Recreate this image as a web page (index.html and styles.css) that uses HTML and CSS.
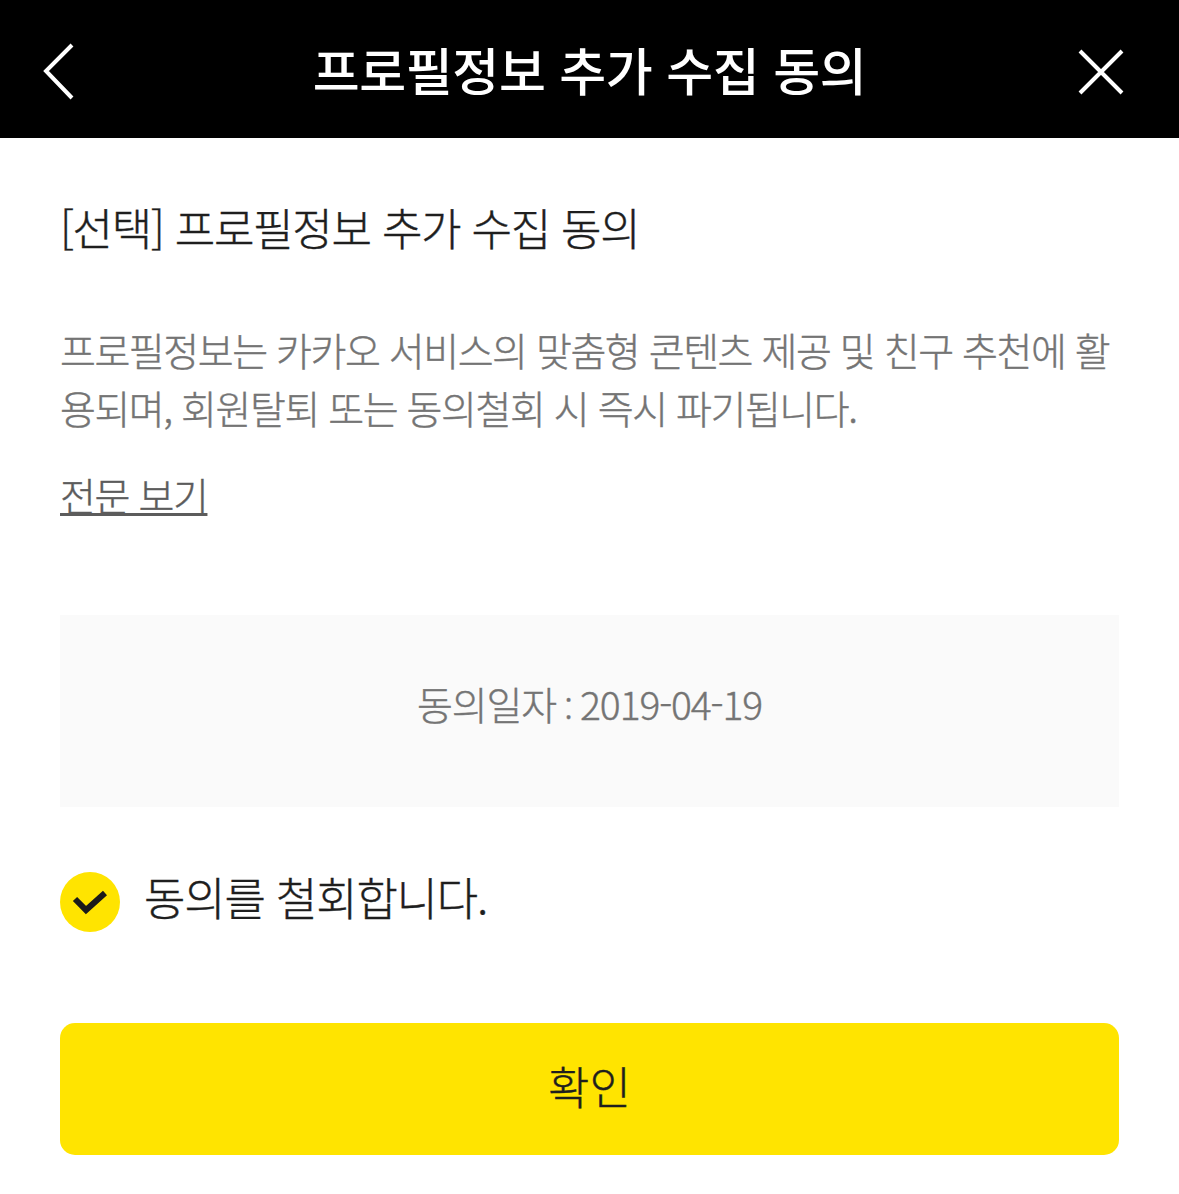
FILE: index.html
```html
<!DOCTYPE html>
<html lang="ko">
<head>
    <meta charset="UTF-8">
    <title>프로필정보 추가 수집 동의</title>
    <link rel="stylesheet" href="styles.css">
</head>
<body>
    <header class="top-bar">
        <svg class="icon-back" width="34" height="58" viewBox="0 0 34 58">
            <path d="M30 2 L4 28 L30 55" fill="none" stroke="#fff" stroke-width="4"/>
        </svg>
        <h1 class="top-title">프로필정보 추가 수집 동의</h1>
        <svg class="icon-close" width="46" height="46" viewBox="0 0 46 46">
            <path d="M2 2 L44 44 M44 2 L2 44" fill="none" stroke="#fff" stroke-width="4"/>
        </svg>
    </header>
    <main class="content">
        <h2 class="terms-title">[선택] 프로필정보 추가 수집 동의</h2>
        <p class="terms-desc">프로필정보는 카카오 서비스의 맞춤형 콘텐츠 제공 및 친구 추천에 활용되며, 회원탈퇴 또는 동의철회 시 즉시 파기됩니다.</p>
        <a class="terms-link">전문 보기</a>
        <div class="date-box">동의일자 <span class="date-colon">:</span> 2019-04-19</div>
        <div class="check-row">
            <svg class="check-icon" width="60" height="60" viewBox="0 0 60 60">
                <circle cx="30" cy="30" r="30" fill="#ffe400"/>
                <path d="M15 27 L26 38 L45 21" fill="none" stroke="#1a1a1a" stroke-width="6"/>
            </svg>
            <span class="check-label">동의를 철회합니다.</span>
        </div>
        <button class="confirm-btn">확인</button>
    </main>
</body>
</html>
```

FILE: styles.css
```css
* {
    margin: 0;
    padding: 0;
    box-sizing: border-box;
}

body {
    font-family: "Noto Sans CJK KR", "Noto Sans", sans-serif;
    font-weight: 300;
    -webkit-text-stroke: 0.4px;
    background: #fff;
    color: #1e1e1e;
}

.top-bar {
    height: 138px;
    background: #000;
    display: grid;
    grid-template-columns: 1fr auto 1fr;
    align-items: center;
    padding: 0 55px;
}

.icon-back {
    margin: 5px 0 0 -13px;
}

.icon-close {
    justify-self: end;
    margin-top: 6px;
}

.top-title {
    color: #fff;
    font-size: 51px;
    font-weight: 500;
    letter-spacing: -0.4px;
    -webkit-text-stroke: 0;
}

.content {
    padding: 0 60px;
}

.terms-title {
    font-size: 44px;
    font-weight: 300;
    letter-spacing: -1.25px;
    line-height: 66px;
    margin-top: 56px;
}

.terms-desc {
    font-size: 39px;
    line-height: 58px;
    letter-spacing: -1.45px;
    color: #747474;
    margin-top: 60px;
    word-break: break-all;
}

.terms-link {
    display: inline-block;
    font-size: 39px;
    line-height: 50px;
    letter-spacing: -1.4px;
    color: #5c5c5c;
    text-decoration: underline;
    text-decoration-thickness: 3px;
    margin-top: 33px;
}

.date-box {
    height: 192px;
    background: #fafafa;
    margin-top: 96px;
    padding-bottom: 16px;
    display: flex;
    align-items: center;
    justify-content: center;
    white-space: pre;
    font-size: 39px;
    letter-spacing: -1.1px;
    word-spacing: -2px;
    color: #747474;
}

.date-colon {
    font-family: "Noto Sans", sans-serif;
}

.check-row {
    display: flex;
    align-items: center;
    gap: 24px;
    height: 60px;
    margin-top: 65px;
}

.check-label {
    font-size: 45px;
    letter-spacing: -1.2px;
    margin-bottom: 12px;
}

.confirm-btn {
    display: block;
    width: 100%;
    height: 132px;
    margin-top: 91px;
    padding-bottom: 8px;
    background: #ffe400;
    border: none;
    border-radius: 15px;
    font-family: inherit;
    font-weight: 300;
    font-size: 45px;
    color: #1e1e1e;
}
```
